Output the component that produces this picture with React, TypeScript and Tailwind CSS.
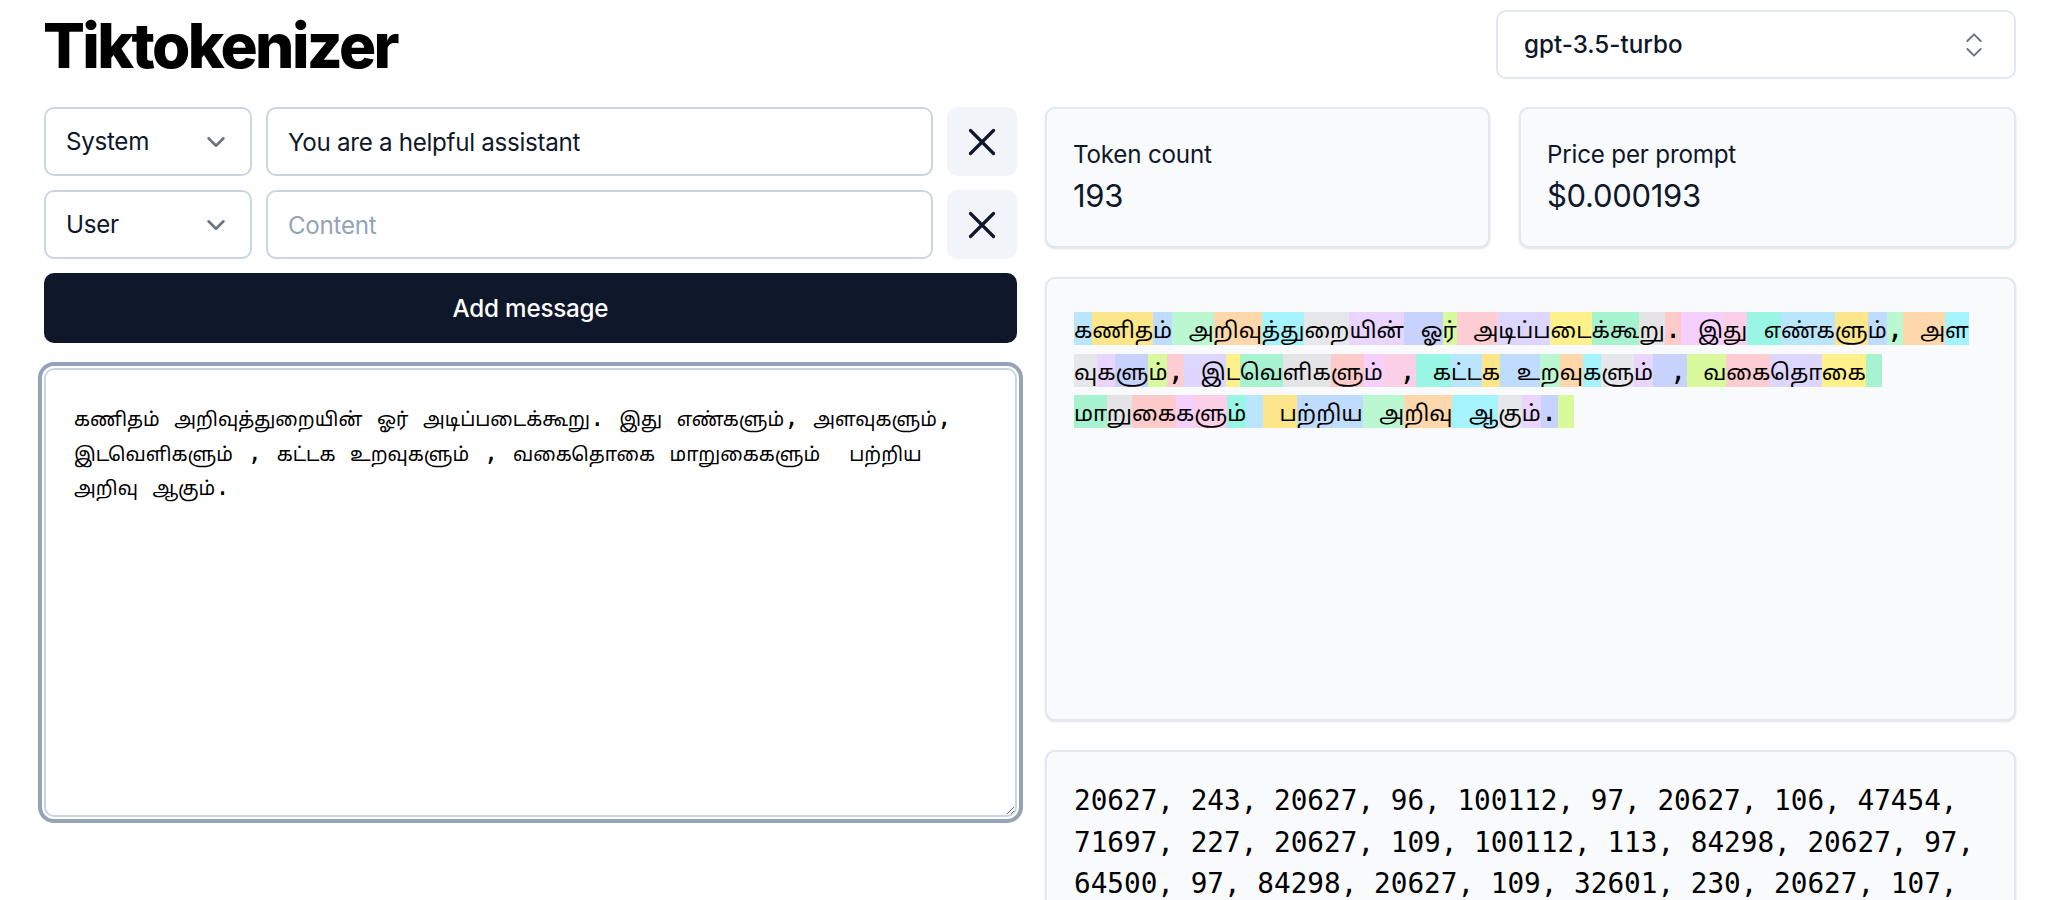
import { ChevronDown, ChevronsUpDown, X } from "lucide-react";

const SANS = "font-['Inter','Liberation_Sans',sans-serif]";
const MONO = "font-['DejaVu_Sans_Mono','Noto_Sans_Tamil','Noto_Sans','Liberation_Mono',monospace]";

const LINES = [
  "கணிதம் அறிவுத்துறையின் ஓர் அடிப்படைக்கூறு. இது எண்களும், அளவுகளும்,\n",
  "இடவெளிகளும் , கட்டக உறவுகளும் , வகைதொகை மாறுகைகளும்  பற்றிய\n",
  "அறிவு ஆகும்.",
];

// colours repeat in this order, one per token
const COLORS = [
  "bg-[#bae6fd]",
  "bg-[#fde68a]",
  "bg-[#bfdbfe]",
  "bg-[#bbf7d0]",
  "bg-[#fed7aa]",
  "bg-[#a5f3fc]",
  "bg-[#e5e7eb]",
  "bg-[#e9d5ff]",
  "bg-[#c7d2fe]",
  "bg-[#d9f99d]",
  "bg-[#fecdd3]",
  "bg-[#ddd6fe]",
  "bg-[#fef08a]",
  "bg-[#a7f3d0]",
  "bg-[#e4e4e7]",
  "bg-[#fecaca]",
  "bg-[#f5d0fe]",
  "bg-[#fbcfe8]",
  "bg-[#99f6e4]",
];

const TOKENS = [
  "க", "ணித", "ம்", " அ", "றிவு", "த்து", "றை", "யின்", " ஓ", "ர்", " அ", "டிப்ப", "டை", "க்கூ", "று", ".", " இ", "து", " எ",
  "ண்க", "ளு", "ம்", ",", " அ", "ள\n", "வு", "க", "ளு", "ம்", ",", " இ", "ட", "வெ", "ளிக", "ளு", "ம்", " ,", " க",
  "ட்ட", "க", " உ", "ற", "வு", "க", "ளு", "ம்", " ,", " வ", "கை", "தொ", "கை", " \nமா", "று", "கை", "க", "ளு", "ம்", " ",
  " ப", "ற்றிய", " அ", "றிவு", " ஆ", "கு", "ம்", ".", " ",
];

// Tamil runs sit smaller than the mono spaces and punctuation around them
function Tamil({ text, className }: { text: string; className: string }) {
  return (
    <>
      {text.split(/([ ,.\n]+)/).map((part, i) =>
        i % 2 === 1 ? (
          part
        ) : (
          <span key={i} className={className}>
            {part}
          </span>
        ),
      )}
    </>
  );
}

function RoleSelect({ role }: { role: string }) {
  return (
    <button className="flex h-[69px] w-[208px] shrink-0 items-center justify-between rounded-[10px] border-2 border-[#cbd5e1] bg-white pl-[20px] pr-[19px] pt-[1px] text-[24.2px] tracking-[-0.3px] text-[#0f172a]">
      {role}
      <ChevronDown className="h-[30px] w-[30px] text-[#6b7280]" strokeWidth={2} />
    </button>
  );
}

function MessageRow({ role, value }: { role: string; value?: string }) {
  return (
    <div className="flex gap-[14px]">
      <RoleSelect role={role} />
      <input
        readOnly
        defaultValue={value}
        placeholder="Content"
        className="h-[69px] min-w-0 flex-1 rounded-[10px] border-2 border-[#cbd5e1] bg-white px-[20px] pt-[1px] text-[24.2px] tracking-[-0.3px] text-[#0f172a] placeholder:text-[#94a3b8]"
      />
      <button className="flex h-[69px] w-[70px] shrink-0 items-center justify-center rounded-[10px] bg-[#f1f5f9] text-[#0f172a]">
        <X className="h-[46px] w-[46px]" strokeWidth={1.7} />
      </button>
    </div>
  );
}

function Stat({ label, value, className }: { label: string; value: string; className: string }) {
  return (
    <div className={`${className} h-[141px] rounded-[10px] border-2 border-[#e2e8f0] bg-[#f8fafc] px-[26px] pb-[27px] pt-[28px] shadow-sm`}>
      <div className="text-[24.2px] leading-[35px] tracking-[-0.2px] text-[#0f172a]">{label}</div>
      <div className="text-[31px] leading-[48px] tracking-[-0.3px] text-[#0f172a]">{value}</div>
    </div>
  );
}

export default function App() {
  return (
    <div className={`h-screen overflow-hidden bg-white ${SANS}`}>
      <div className="ml-[44px] w-[1972px]">
        <header className="flex h-[107px] items-start justify-between">
          <h1 className="-ml-[1px] mt-[8px] text-[62px] font-extrabold leading-[76px] tracking-[-2.6px] text-black">Tiktokenizer</h1>
          <button className="mt-[10px] flex h-[69px] w-[520px] items-center justify-between rounded-[10px] border-2 border-[#e2e8f0] bg-white pl-[26px] pr-[24px] pt-[1px] text-[24.2px] font-medium text-[#0f172a]">
            gpt-3.5-turbo
            <ChevronsUpDown className="h-[32px] w-[32px] text-[#6b7280]" strokeWidth={1.4} />
          </button>
        </header>

        <div className="grid grid-cols-[973px_971px] gap-[28px]">
          {/* Left column */}
          <section className="flex flex-col">
            <div className="flex flex-col gap-[14px]">
              <MessageRow role="System" value="You are a helpful assistant" />
              <MessageRow role="User" />
              <button className="h-[70px] rounded-[10px] bg-[#0f172a] pt-[2px] text-[24.2px] font-medium tracking-[-0.2px] text-white">Add message</button>
            </div>
            <div
              role="textbox"
              className={`mt-[25px] h-[449px] w-full resize-y overflow-auto whitespace-pre rounded-[10px] border-2 border-[#cbd5e1] bg-white px-[28px] pb-[28px] pt-[31px] text-[24.2px] leading-[34.5px] text-black shadow-[0_0_0_2px_#ffffff,0_0_0_6px_#94a3b8] ${MONO}`}
            >
              {LINES.map((line, i) => (
                <Tamil key={i} text={line} className="text-[19.4px] leading-none" />
              ))}
            </div>
          </section>

          {/* Right column */}
          <section className="flex flex-col gap-[29px]">
            <div className="flex gap-[29px]">
              <Stat label="Token count" value="193" className="w-[445px]" />
              <Stat label="Price per prompt" value="$0.000193" className="flex-1" />
            </div>

            <div className="h-[444px] rounded-[10px] border-2 border-[#e2e8f0] bg-[#f8fafc] px-[27px] pb-[30px] pt-[29px] shadow-sm">
              <pre className={`whitespace-pre text-[27.7px] leading-[41.5px] text-black ${MONO}`}>
                {TOKENS.map((token, i) => (
                  <span key={i} className={COLORS[i % COLORS.length]}>
                    <Tamil text={token} className="text-[22.2px] leading-none" />
                  </span>
                ))}
              </pre>
            </div>

            <div className={`h-[600px] rounded-[10px] border-2 border-[#e2e8f0] bg-[#f8fafc] px-[27px] pb-[30px] pt-[28px] text-[27.7px] leading-[41.5px] text-black shadow-sm ${MONO}`}>
              <div>20627, 243, 20627, 96, 100112, 97, 20627, 106, 47454,</div>
              <div>71697, 227, 20627, 109, 100112, 113, 84298, 20627, 97,</div>
              <div>64500, 97, 84298, 20627, 109, 32601, 230, 20627, 107,</div>
            </div>
          </section>
        </div>
      </div>
    </div>
  );
}
